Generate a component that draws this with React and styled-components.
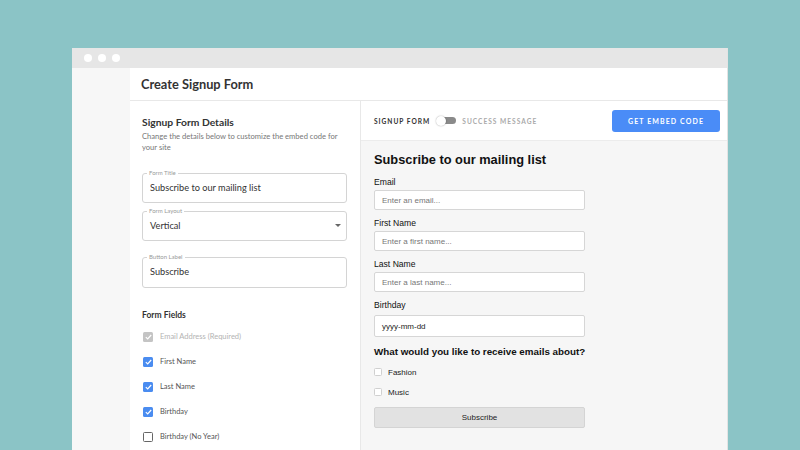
import React from "react";
import styled, { createGlobalStyle } from "styled-components";

const GlobalStyle = createGlobalStyle`
  html, body {
    margin: 0;
    padding: 0;
    background: #8bc4c6;
    overflow: hidden;
  }
  body {
    font-family: Lato, "Open Sans", sans-serif;
  }
`;

const Page = styled.div`
  width: 800px;
  height: 450px;
  padding: 48px 72px 0 72px;
  box-sizing: border-box;
  overflow: hidden;
`;

const Window = styled.div`
  width: 656px;
  height: 420px;
  background: #fff;
  display: flex;
  flex-direction: column;
  border-right: 1px solid #e3e3e3;
  box-sizing: border-box;
`;

const TitleBar = styled.div`
  height: 20px;
  background: #e6e6e6;
  display: flex;
  align-items: center;
  gap: 6px;
  padding-left: 12px;
  flex-shrink: 0;
`;

const Dot = styled.span`
  width: 8px;
  height: 8px;
  border-radius: 50%;
  background: #fff;
`;

const Body = styled.div`
  flex: 1;
  display: flex;
`;

const Sidebar = styled.div`
  width: 58px;
  background: #f7f7f7;
  flex-shrink: 0;
`;

const Main = styled.div`
  flex: 1;
  display: flex;
  flex-direction: column;
`;

const Header = styled.div`
  height: 32px;
  border-bottom: 1px solid #e8e8e8;
  display: flex;
  align-items: center;
  padding-left: 11px;
  font-size: 12.8px;
  font-weight: 700;
  color: #333;
`;

const Content = styled.div`
  flex: 1;
  display: flex;
`;

const LeftPanel = styled.div`
  width: 231px;
  border-right: 1px solid #e8e8e8;
  padding: 15px 13px 0 12px;
  box-sizing: border-box;
  flex-shrink: 0;
`;

const PanelTitle = styled.div`
  font-size: 10.3px;
  font-weight: 700;
  color: #333;
`;

const PanelDesc = styled.div`
  font-size: 7.6px;
  color: #777;
  line-height: 11px;
  margin: 3px -6px 17px 0;
`;

const Field = styled.fieldset`
  margin: 0 0 ${(p) => p.$gap}px 0;
  padding: 0 7px;
  border: 1px solid #d4d4d4;
  border-radius: 3px;
  height: ${(p) => p.$h || 33}px;
  box-sizing: border-box;
  display: flex;
  align-items: center;
  justify-content: space-between;
`;

const Legend = styled.legend`
  font-size: 6px;
  color: #9a9a9a;
  padding: 0 2px;
  margin-left: -3px;
  line-height: 6px;
`;

const FieldValue = styled.span`
  font-size: 9.2px;
  color: #333;
  margin-top: -4px;
`;

const Caret = styled.span`
  width: 0;
  height: 0;
  border-left: 3px solid transparent;
  border-right: 3px solid transparent;
  border-top: 3px solid #666;
  margin-top: -4px;
  margin-right: -2px;
`;

const SectionLabel = styled.div`
  font-size: 8.5px;
  font-weight: 700;
  color: #333;
  margin-top: 22px;
  margin-bottom: 4px;
`;

const CheckRow = styled.div`
  display: flex;
  align-items: center;
  gap: 7px;
  height: 25px;
  font-size: 7.5px;
  color: ${(p) => (p.$disabled ? "#b3b3b3" : "#555")};
`;

const Box = styled.span`
  width: 10px;
  height: 10px;
  box-sizing: border-box;
  border-radius: 1.5px;
  display: flex;
  align-items: center;
  justify-content: center;
  background: ${(p) =>
    p.$state === "on" ? "#4a8cf0" : p.$state === "dis" ? "#c4c4c4" : "#fff"};
  border: ${(p) => (p.$state === "off" ? "1.5px solid #666" : "none")};
  margin-left: 1px;
`;

const RightPanel = styled.div`
  flex: 1;
  display: flex;
  flex-direction: column;
  background: #f6f6f6;
`;

const Toolbar = styled.div`
  height: 39px;
  background: #fff;
  border-bottom: 1px solid #ececec;
  display: flex;
  align-items: center;
  padding: 0 7px 0 13px;
  flex-shrink: 0;
`;

const ModeLabel = styled.span`
  font-size: 6.6px;
  font-weight: 700;
  letter-spacing: 1px;
  color: ${(p) => (p.$active ? "#333" : "#aaa")};
`;

const Toggle = styled.span`
  width: 20px;
  height: 10px;
  margin: 0 6px 0 6px;
  position: relative;
  display: inline-block;
  &::before {
    content: "";
    position: absolute;
    left: 3px;
    right: 0;
    top: 1.5px;
    height: 7px;
    border-radius: 4px;
    background: #8a8a8a;
  }
  &::after {
    content: "";
    position: absolute;
    left: 0;
    top: 0;
    width: 10px;
    height: 10px;
    border-radius: 50%;
    background: #fff;
    box-shadow: 0 0 1.5px rgba(0, 0, 0, 0.4);
  }
`;

const EmbedButton = styled.button`
  margin-left: auto;
  width: 108px;
  height: 22px;
  border: none;
  border-radius: 3px;
  background: #4a8cf7;
  color: #fff;
  font-family: Lato, sans-serif;
  font-size: 7px;
  font-weight: 700;
  letter-spacing: 1.1px;
`;

const Preview = styled.div`
  padding: 11px 13px;
  font-family: "Liberation Sans", Arial, sans-serif;
  color: #111;
`;

const PreviewTitle = styled.div`
  font-size: 12.8px;
  font-weight: 700;
  margin-bottom: 10px;
`;

const PreviewLabel = styled.div`
  font-size: 8.6px;
  margin-bottom: ${(p) => p.$gap || 3}px;
`;

const PreviewInput = styled.div`
  width: 211px;
  box-sizing: border-box;
  background: #fff;
  border: 1px solid #d6d6d6;
  border-radius: 2px;
  display: flex;
  align-items: center;
  padding-left: 7px;
  font-size: 8px;
  color: ${(p) => (p.$filled ? "#222" : "#777")};
  margin-bottom: 8px;
  height: ${(p) => p.$h || 20}px;
`;

const Question = styled.div`
  font-size: 9.8px;
  font-weight: 700;
  margin-top: 9px;
  margin-bottom: 5px;
`;

const Option = styled.div`
  display: flex;
  align-items: center;
  gap: 6px;
  height: 20px;
  font-size: 8px;
  color: #222;
`;

const SmallBox = styled.span`
  width: 8px;
  height: 8px;
  box-sizing: border-box;
  border: 1px solid #d0d0d0;
  border-radius: 1.5px;
  background: #fff;
`;

const SubscribeButton = styled.div`
  width: 211px;
  margin-top: 5px;
  height: 21px;
  background: #e2e2e2;
  border: 1px solid #d4d4d4;
  border-radius: 2px;
  box-sizing: border-box;
  display: flex;
  align-items: center;
  justify-content: center;
  font-size: 8px;
  color: #222;
`;

const Check = () => (
  <svg width="7" height="6" viewBox="0 0 7 6">
    <path d="M0.8 3.1 L2.7 4.9 L6.2 1" stroke="#fff" strokeWidth="1.2" fill="none" />
  </svg>
);

const fields = [
  { label: "Email Address (Required)", state: "dis" },
  { label: "First Name", state: "on" },
  { label: "Last Name", state: "on" },
  { label: "Birthday", state: "on" },
  { label: "Birthday (No Year)", state: "off" },
];

const inputs = [
  { label: "Email", ph: "Enter an email..." },
  { label: "First Name", ph: "Enter a first name..." },
  { label: "Last Name", ph: "Enter a last name..." },
  { label: "Birthday", ph: "yyyy-mm-dd", filled: true, h: 22, gap: 5 },
];

export default function App() {
  return (
    <Page>
      <GlobalStyle />
      <Window>
        <TitleBar>
          <Dot />
          <Dot />
          <Dot />
        </TitleBar>
        <Body>
          <Sidebar />
          <Main>
            <Header>Create Signup Form</Header>
            <Content>
              <LeftPanel>
                <PanelTitle>Signup Form Details</PanelTitle>
                <PanelDesc>
                  Change the details below to customize the embed code for your site
                </PanelDesc>
                <Field $gap={5}>
                  <Legend>Form Title</Legend>
                  <FieldValue>Subscribe to our mailing list</FieldValue>
                </Field>
                <Field $gap={13}>
                  <Legend>Form Layout</Legend>
                  <FieldValue>Vertical</FieldValue>
                  <Caret />
                </Field>
                <Field $gap={0} $h={34}>
                  <Legend>Button Label</Legend>
                  <FieldValue>Subscribe</FieldValue>
                </Field>
                <SectionLabel>Form Fields</SectionLabel>
                {fields.map((f) => (
                  <CheckRow key={f.label} $disabled={f.state === "dis"}>
                    <Box $state={f.state}>{f.state !== "off" && <Check />}</Box>
                    {f.label}
                  </CheckRow>
                ))}
              </LeftPanel>
              <RightPanel>
                <Toolbar>
                  <ModeLabel $active>SIGNUP FORM</ModeLabel>
                  <Toggle />
                  <ModeLabel>SUCCESS MESSAGE</ModeLabel>
                  <EmbedButton>GET EMBED CODE</EmbedButton>
                </Toolbar>
                <Preview>
                  <PreviewTitle>Subscribe to our mailing list</PreviewTitle>
                  {inputs.map((i) => (
                    <div key={i.label}>
                      <PreviewLabel $gap={i.gap}>{i.label}</PreviewLabel>
                      <PreviewInput $filled={i.filled} $h={i.h}>
                        {i.ph}
                      </PreviewInput>
                    </div>
                  ))}
                  <Question>What would you like to receive emails about?</Question>
                  <Option>
                    <SmallBox />
                    Fashion
                  </Option>
                  <Option>
                    <SmallBox />
                    Music
                  </Option>
                  <SubscribeButton>Subscribe</SubscribeButton>
                </Preview>
              </RightPanel>
            </Content>
          </Main>
        </Body>
      </Window>
    </Page>
  );
}
